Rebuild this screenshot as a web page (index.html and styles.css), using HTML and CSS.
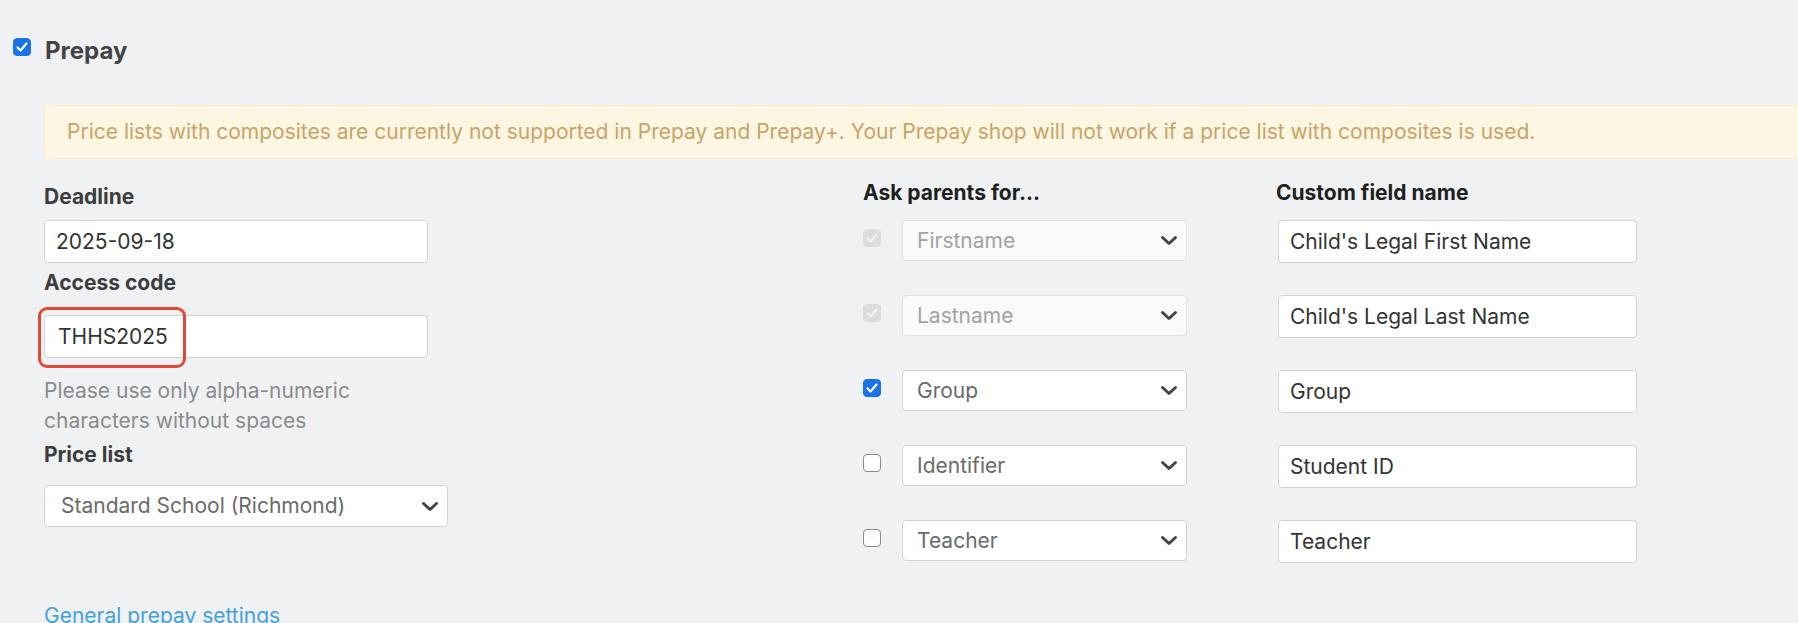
FILE: index.html
```html
<!DOCTYPE html>
<html lang="en">

<head>
  <meta charset="UTF-8">
  <meta name="viewport" content="width=device-width, initial-scale=1.0">
  <title>Prepay</title>
  <link rel="stylesheet" href="styles.css">
</head>

<body>
  <div class="page">
    <div class="section-title">
      <span class="check checked">
        <svg viewBox="0 0 18 18" width="18" height="18"><path d="M4.5 9.5 L7.5 12.5 L13.5 5.5" fill="none" stroke="#fff" stroke-width="2.2" stroke-linecap="round" stroke-linejoin="round"/></svg>
      </span>
      <h2 class="title">Prepay</h2>
    </div>

    <div class="alert">Price lists with composites are currently not supported in Prepay and Prepay+. Your Prepay shop will not work if a price list with composites is used.</div>

    <div class="settings">
      <div class="col-main">
        <label class="label">Deadline</label>
        <input class="text-input" type="text" value="2025-09-18">

        <label class="label label-access">Access code</label>
        <div class="highlight-wrap">
          <input class="text-input code-input" type="text" value="THHS2025">
          <span class="highlight"></span>
        </div>
        <p class="help">Please use only alpha-numeric<br>characters without spaces</p>

        <label class="label label-price">Price list</label>
        <div class="select select-wide">
          <span>Standard School (Richmond)</span>
          <svg class="chevron" viewBox="0 0 18 11" width="18" height="11"><path d="M2.5 2.5 L9 8.5 L15.5 2.5" fill="none" stroke="#444" stroke-width="3" stroke-linecap="round" stroke-linejoin="round"/></svg>
        </div>

        <a class="link" href="#">General prepay settings</a>
      </div>

      <div class="fields">
        <div class="field-head">
          <div class="head-ask">Ask parents for...</div>
          <div class="head-custom">Custom field name</div>
        </div>

        <div class="field-row">
          <span class="check disabled">
            <svg viewBox="0 0 18 18" width="18" height="18"><path d="M4.5 9.5 L7.5 12.5 L13.5 5.5" fill="none" stroke="#f4f4f4" stroke-width="2" stroke-linecap="round" stroke-linejoin="round"/></svg>
          </span>
          <div class="select is-disabled">
            <span>Firstname</span>
            <svg class="chevron" viewBox="0 0 18 11" width="18" height="11"><path d="M2.5 2.5 L9 8.5 L15.5 2.5" fill="none" stroke="#444" stroke-width="3" stroke-linecap="round" stroke-linejoin="round"/></svg>
          </div>
          <input class="text-input custom-input" type="text" value="Child's Legal First Name">
        </div>

        <div class="field-row">
          <span class="check disabled">
            <svg viewBox="0 0 18 18" width="18" height="18"><path d="M4.5 9.5 L7.5 12.5 L13.5 5.5" fill="none" stroke="#f4f4f4" stroke-width="2" stroke-linecap="round" stroke-linejoin="round"/></svg>
          </span>
          <div class="select is-disabled">
            <span>Lastname</span>
            <svg class="chevron" viewBox="0 0 18 11" width="18" height="11"><path d="M2.5 2.5 L9 8.5 L15.5 2.5" fill="none" stroke="#444" stroke-width="3" stroke-linecap="round" stroke-linejoin="round"/></svg>
          </div>
          <input class="text-input custom-input" type="text" value="Child's Legal Last Name">
        </div>

        <div class="field-row">
          <span class="check checked">
            <svg viewBox="0 0 18 18" width="18" height="18"><path d="M4.5 9.5 L7.5 12.5 L13.5 5.5" fill="none" stroke="#fff" stroke-width="2.2" stroke-linecap="round" stroke-linejoin="round"/></svg>
          </span>
          <div class="select">
            <span>Group</span>
            <svg class="chevron" viewBox="0 0 18 11" width="18" height="11"><path d="M2.5 2.5 L9 8.5 L15.5 2.5" fill="none" stroke="#444" stroke-width="3" stroke-linecap="round" stroke-linejoin="round"/></svg>
          </div>
          <input class="text-input custom-input" type="text" value="Group">
        </div>

        <div class="field-row">
          <span class="check"></span>
          <div class="select">
            <span>Identifier</span>
            <svg class="chevron" viewBox="0 0 18 11" width="18" height="11"><path d="M2.5 2.5 L9 8.5 L15.5 2.5" fill="none" stroke="#444" stroke-width="3" stroke-linecap="round" stroke-linejoin="round"/></svg>
          </div>
          <input class="text-input custom-input" type="text" value="Student ID">
        </div>

        <div class="field-row">
          <span class="check"></span>
          <div class="select">
            <span>Teacher</span>
            <svg class="chevron" viewBox="0 0 18 11" width="18" height="11"><path d="M2.5 2.5 L9 8.5 L15.5 2.5" fill="none" stroke="#444" stroke-width="3" stroke-linecap="round" stroke-linejoin="round"/></svg>
          </div>
          <input class="text-input custom-input" type="text" value="Teacher">
        </div>
      </div>
    </div>
  </div>
</body>

</html>
```

FILE: styles.css
```css
* {
  box-sizing: border-box;
}

html,
body {
  margin: 0;
  height: 100%;
  overflow: hidden;
}

body {
  background: #f0f1f3;
  font-family: Inter, "Noto Sans", sans-serif;
  font-size: 21px;
  line-height: 24px;
  color: #333;
}

.page {
  padding-top: 37px;
  overflow: hidden;
}

.section-title {
  display: flex;
  align-items: flex-start;
  padding-left: 13px;
}

.title {
  margin: 0 0 0 14px;
  font-size: 24px;
  line-height: 28px;
  font-weight: 700;
  color: #444;
}

.check {
  flex: none;
  width: 18px;
  height: 18px;
  margin-top: 1px;
  border: 1.5px solid #8a8a8a;
  border-radius: 4px;
  background: #fff;
  display: flex;
}

.check svg {
  margin: -1.5px;
}

.check.checked {
  background: #1a73e8;
  border-color: #1a73e8;
}

.check.disabled {
  background: #dcdcdc;
  border-color: #dcdcdc;
}

.alert {
  margin: 40px -12px 0 44px;
  padding: 14px 22px;
  background: #fdf6e3;
  border: 1px solid #f9ecc9;
  border-radius: 5px;
  color: #c9a466;
  white-space: nowrap;
}

.settings {
  display: flex;
  padding: 19px 0 0 44px;
}

.col-main {
  width: 819px;
  flex: none;
  display: flex;
  flex-direction: column;
  align-items: flex-start;
  padding-top: 7px;
}

.label {
  display: block;
  font-weight: 700;
  color: #3d3d3d;
  margin-bottom: 11px;
}

.label-access {
  margin-top: 8px;
  margin-bottom: 20px;
}

.label-price {
  margin-top: 8px;
  margin-bottom: 18px;
}

.text-input {
  width: 384px;
  height: 43px;
  padding: 0 11px;
  border: 1px solid #d3d3d3;
  border-radius: 4px;
  background: #fff;
  font: inherit;
  color: #333;
  outline: none;
}

.code-input {
  padding-left: 13px;
}

.highlight-wrap {
  position: relative;
}

.highlight {
  position: absolute;
  left: -6px;
  top: -8px;
  width: 148px;
  height: 61px;
  border: 3px solid #e2483b;
  border-radius: 9px;
}

.help {
  margin: 18px 0 0;
  line-height: 29.5px;
  color: #8b8b8b;
}

.select {
  display: flex;
  align-items: center;
  justify-content: space-between;
  width: 285px;
  height: 41px;
  padding: 0 8px 0 14px;
  border: 1px solid #d3d3d3;
  border-radius: 4px;
  background: #fff;
  color: #6a6a6a;
}

.select.is-disabled {
  background: #fafafa;
  border-color: #e1e1e1;
  color: #a3a3a3;
}

.select-wide {
  width: 404px;
  height: 42px;
  padding-left: 16px;
}

.chevron {
  flex: none;
}

.link {
  margin-top: 77px;
  color: #45a2d9;
  text-decoration: none;
}

.fields {
  display: flex;
  flex-direction: column;
  gap: 32px;
}

.field-head {
  display: flex;
  font-weight: 700;
  color: #1f1f1f;
  margin: 3px 0 -17px;
}

.head-ask {
  width: 413px;
}

.field-row {
  display: flex;
  align-items: flex-start;
}

.field-row .check {
  margin: 9px 21px 0 0;
}

.custom-input {
  width: 359px;
  margin-left: 91px;
}
```
